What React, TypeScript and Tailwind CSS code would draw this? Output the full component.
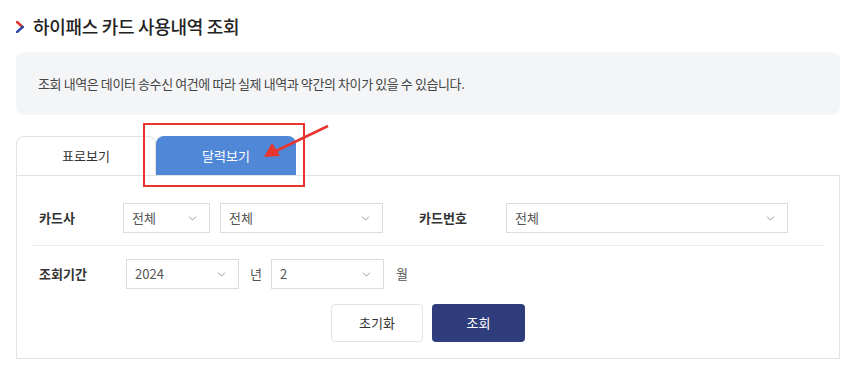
import { ChevronDown } from "lucide-react";

function Select({ value, width }: { value: string; width: string }) {
  return (
    <div
      className={`${width} h-[30px] border border-[#dcdcdc] bg-white flex items-center justify-between pl-[8px] pr-[10px] text-[13px] text-[#555]`}
    >
      <span>{value}</span>
      <ChevronDown size={13} strokeWidth={1.5} className="text-[#888]" />
    </div>
  );
}

export default function App() {
  return (
    <div
      className="w-[851px] h-[370px] bg-white pl-4 pr-[11px] relative overflow-hidden"
      style={{ fontFamily: '"Noto Sans CJK KR", "Noto Sans", sans-serif' }}
    >
      {/* TITLE */}
      <div className="flex items-center gap-[9px] pt-[9px] h-[44px]">
        <svg width="8" height="12" viewBox="0 0 8 12">
          <path d="M1 1 L6.5 6" stroke="#d9342b" strokeWidth="2.6" strokeLinecap="square" fill="none" />
          <path d="M6.5 6 L1 11" stroke="#2f4aa8" strokeWidth="2.6" strokeLinecap="square" fill="none" />
        </svg>
        <h1 className="text-[18px] font-medium text-[#222] tracking-[-0.3px]">하이패스 카드 사용내역 조회</h1>
      </div>

      {/* INFO */}
      <div className="mt-[8px] h-[63px] rounded-lg bg-[#f4f5f7] flex items-center pl-[22px] text-[13px] text-[#444] tracking-[-0.4px]">
        조회 내역은 데이터 송수신 여건에 따라 실제 내역과 약간의 차이가 있을 수 있습니다.
      </div>

      {/* TABS */}
      <div className="mt-[21px] flex h-[39px]">
        <div className="w-[140px] border border-b-0 border-[#e3e3e3] rounded-t-lg flex items-center justify-center text-[13px] text-[#333]">
          표로보기
        </div>
        <div className="w-[140px] bg-[#5087d6] rounded-t-lg flex items-center justify-center text-[13px] text-white">
          달력보기
        </div>
        <div className="flex-1" />
      </div>

      {/* PANEL */}
      <div className="border border-[#e3e3e3] px-4 pt-[27px] pb-[16px]">
        <div className="flex items-center pl-[6px] pb-[12px] border-b border-[#ebebeb]">
          <span className="w-[84px] text-[13px] font-bold text-[#333]">카드사</span>
          <Select value="전체" width="w-[87px]" />
          <div className="w-[10px]" />
          <Select value="전체" width="w-[163px]" />
          <span className="ml-[36px] w-[87px] text-[13px] font-bold text-[#333]">카드번호</span>
          <Select value="전체" width="w-[282px]" />
        </div>
        <div className="flex items-center pl-[6px] pt-[13px]">
          <span className="w-[87px] text-[13px] font-bold text-[#333]">조회기간</span>
          <Select value="2024" width="w-[113px]" />
          <span className="ml-[11px] mr-[9px] text-[13px] text-[#555]">년</span>
          <Select value="2" width="w-[113px]" />
          <span className="ml-[12px] text-[13px] text-[#555]">월</span>
        </div>
        <div className="flex justify-center gap-[9px] mt-[15px]">
          <button className="w-[92px] h-[38px] border border-[#e3e3e3] rounded-[4px] bg-white text-[13px] text-[#333]">
            초기화
          </button>
          <button className="w-[93px] h-[38px] rounded-[4px] bg-[#2f3d7c] text-[13px] text-white">
            조회
          </button>
        </div>
      </div>

      {/* ANNOTATION */}
      <div className="absolute left-[143px] top-[123px] w-[162px] h-[64px] border-2 border-[#e8352e]" />
      <svg className="absolute left-0 top-0" width="851" height="370">
        <line x1="328" y1="126" x2="276" y2="151" stroke="#e8352e" strokeWidth="2.5" />
        <polygon points="264,157 272,143 280,156" fill="#e8352e" />
      </svg>
    </div>
  );
}
